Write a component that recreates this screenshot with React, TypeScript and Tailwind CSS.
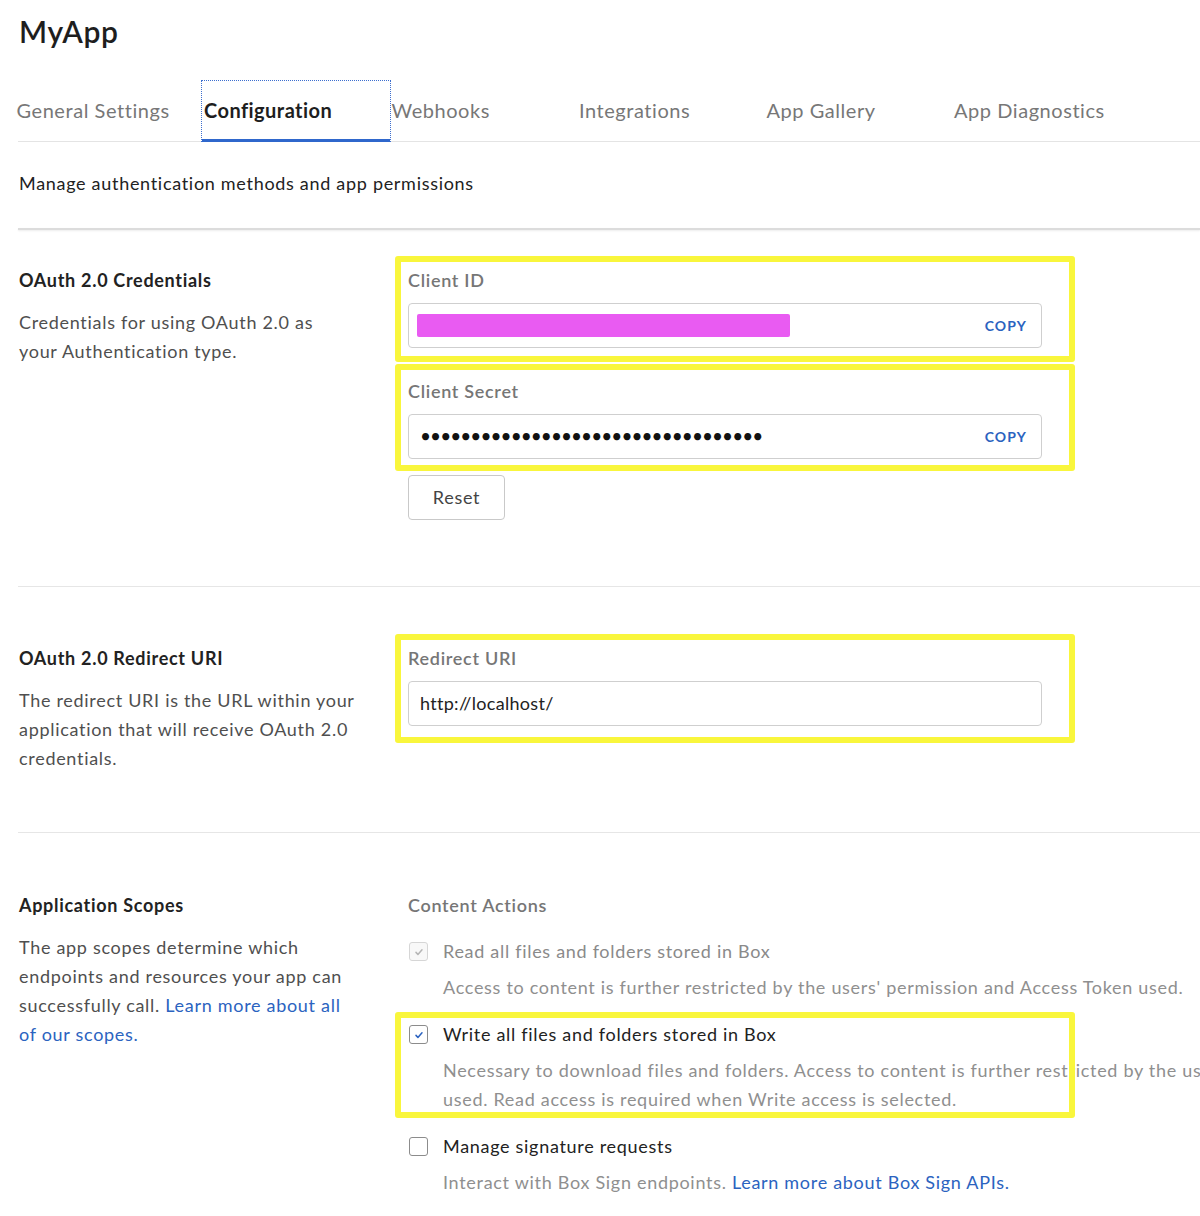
import React from 'react';

const tabs = ['General Settings', 'Configuration', 'Webhooks', 'Integrations', 'App Gallery', 'App Diagnostics'];

// hand-drawn yellow frame laid over a block
function Marker({ className }: { className: string }) {
  return (
    <div
      className={`pointer-events-none absolute -left-[13px] w-[680px] rounded-[3px] border-[6px] border-[#f9f63c] blur-[0.5px] ${className}`}
    />
  );
}

function Field({ children, copy }: { children: React.ReactNode; copy?: boolean }) {
  return (
    <div className="mt-[11px] flex h-[45px] w-[634px] items-center justify-between rounded-[4px] border border-[#cfcfcf] bg-white pl-[11px] pr-[14px]">
      <div className="flex items-center">{children}</div>
      {copy && (
        <button className="text-[14px] font-bold tracking-[0.08em] text-[#2b63c0]">COPY</button>
      )}
    </div>
  );
}

function Label({ children }: { children: React.ReactNode }) {
  return <div className="text-[18px] font-semibold leading-[24px] text-[#767676]">{children}</div>;
}

function Checkbox({ state }: { state: 'on' | 'off' | 'disabled' }) {
  const box = state === 'disabled' ? 'border-[#d6d6d6] bg-[#f8f8f8]' : 'border-[#8c8c8c] bg-white';
  return (
    <div className={`flex h-[19px] w-[19px] items-center justify-center rounded-[3px] border-[1.5px] ${box}`}>
      {state !== 'off' && (
        <svg viewBox="0 0 16 16" className="h-[12px] w-[12px]">
          <path
            d="M4 8.5l2.6 2.8L12 5"
            fill="none"
            stroke={state === 'on' ? '#2b63c0' : '#b5b5b5'}
            strokeWidth="2"
            strokeLinecap="round"
            strokeLinejoin="round"
          />
        </svg>
      )}
    </div>
  );
}

function Scope({
  state,
  title,
  children,
}: {
  state: 'on' | 'off' | 'disabled';
  title: string;
  children: React.ReactNode;
}) {
  return (
    <div className="flex">
      <div className="flex h-[29px] w-[35px] shrink-0 items-center pl-px">
        <Checkbox state={state} />
      </div>
      <div>
        <div className={`text-[18px] leading-[29px] ${state === 'disabled' ? 'text-[#8a8a8a]' : 'text-[#222]'}`}>
          {title}
        </div>
        <div className="mt-[7px] w-[1070px] text-[18px] leading-[29px] text-[#8f8f8f]">{children}</div>
      </div>
    </div>
  );
}

function Aside({ title, children }: { title: string; children: React.ReactNode }) {
  return (
    <div className="w-[390px] shrink-0 pl-px">
      <h2 className="text-[18px] font-bold leading-[24px] text-[#222]">{title}</h2>
      <p className="mt-[16.5px] w-[360px] text-[18px] leading-[29px] text-[#4f4f4f]">{children}</p>
    </div>
  );
}

export default function App() {
  return (
    <div className="h-[1216px] w-[1200px] overflow-hidden bg-white pl-[18px] font-['Lato',sans-serif] tracking-[0.7px] text-[#222]">
      <h1 className="pl-px pt-[13px] text-[30px] font-semibold leading-[36px] tracking-[0.6px] text-[#1e1e1e]">
        MyApp
      </h1>

      <nav className="mt-[32px] border-b border-[#e4e4e4]">
        <div className="-ml-[3.5px] flex">
          {tabs.map((t) =>
            t === 'Configuration' ? (
              <div
                key={t}
                className="relative flex h-[60px] w-[187.5px] items-center pb-[3px] pl-[2px] text-[20px] font-bold tracking-[0.45px] text-[#1e1e1e] outline-1 outline-dotted outline-[#3d6fcf]"
              >
                {t}
                <div className="absolute -bottom-px left-0 right-0 h-[3px] bg-[#2f67cc]" />
              </div>
            ) : (
              <div
                key={t}
                className="flex h-[60px] w-[187.5px] items-center pb-[3px] pl-[2px] text-[20px] tracking-[0.55px] text-[#777]"
              >
                {t}
              </div>
            ),
          )}
        </div>
      </nav>

      <p className="mt-[27.5px] pl-px text-[18px] leading-[27px] text-[#222]">
        Manage authentication methods and app permissions
      </p>

      <div className="mt-[31px] h-[2px] bg-[#dcdcdc] shadow-[0_1px_2px_rgba(0,0,0,0.08)]" />

      {/* OAuth credentials */}
      <section className="flex pb-[66px] pt-[38px]">
        <Aside title="OAuth 2.0 Credentials">
          Credentials for using OAuth 2.0 as
          <br />
          your Authentication type.
        </Aside>
        <div>
          <div className="relative">
            <Label>Client ID</Label>
            <Field copy>
              <div className="-ml-[3px] h-[23px] w-[373px] rounded-[2px] bg-[#e95bf2] blur-[0.4px]" />
            </Field>
            <Marker className="-top-[12px] -bottom-[14px]" />
          </div>
          <div className="relative mt-[31px]">
            <Label>Client Secret</Label>
            <Field copy>
              <span className="text-[19px] tracking-[-0.95px] text-[#111]">••••••••••••••••••••••••••••••••••</span>
            </Field>
            <Marker className="-top-[15px] -bottom-[12px]" />
          </div>
          <button className="mt-[16px] h-[45px] w-[97px] rounded-[4px] border border-[#c9c9c9] text-[18px] text-[#444]">
            Reset
          </button>
        </div>
      </section>

      <div className="h-px bg-[#e6e6e6]" />

      {/* Redirect URI */}
      <section className="flex pb-[58.5px] pt-[59px]">
        <Aside title="OAuth 2.0 Redirect URI">
          The redirect URI is the URL within your
          <br />
          application that will receive OAuth 2.0
          <br />
          credentials.
        </Aside>
        <div>
          <div className="relative">
            <Label>Redirect URI</Label>
            <Field>
              <span className="text-[18px] tracking-[0.3px] text-[#222]">http://localhost/</span>
            </Field>
            <Marker className="-top-[12px] -bottom-[17px]" />
          </div>
        </div>
      </section>

      <div className="h-px bg-[#e6e6e6]" />

      {/* Scopes */}
      <section className="flex pt-[60px]">
        <Aside title="Application Scopes">
          The app scopes determine which
          <br />
          endpoints and resources your app can
          <br />
          successfully call. <a className="text-[#2b63c0]">Learn more about all</a>
          <br />
          <a className="text-[#2b63c0]">of our scopes.</a>
        </Aside>
        <div>
          <Label>Content Actions</Label>
          <div className="mt-[20.5px] flex flex-col gap-[18px]">
            <Scope state="disabled" title="Read all files and folders stored in Box">
              Access to content is further restricted by the users' permission and Access Token used.
            </Scope>
            <div className="relative">
              <Scope state="on" title="Write all files and folders stored in Box">
                Necessary to download files and folders. Access to content is further restricted by the users'
                permission and Access Token used. Read access is required when Write access is selected.
              </Scope>
              <Marker className="-top-[8px] -bottom-[4px]" />
            </div>
            <Scope state="off" title="Manage signature requests">
              Interact with Box Sign endpoints. <a className="text-[#2b63c0]">Learn more about Box Sign APIs.</a>
            </Scope>
          </div>
        </div>
      </section>
    </div>
  );
}
